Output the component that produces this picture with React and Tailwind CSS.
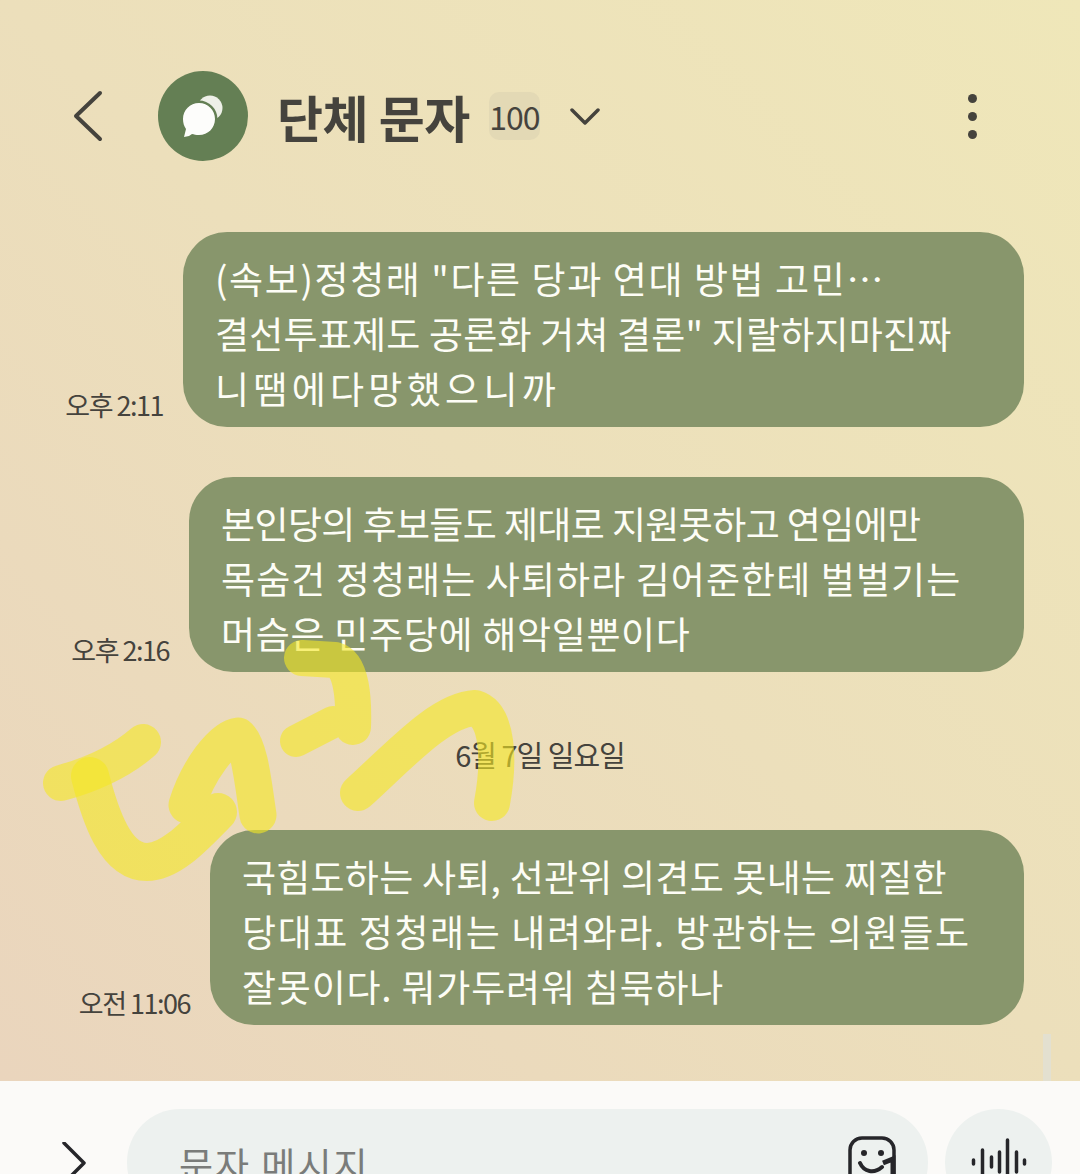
const krFont = "font-['Noto_Sans_CJK_KR',sans-serif]"

const messages = [
  {
    time: '오후 2:11',
    width: 'w-[841px]',
    lines: [
      { text: '(속보)정청래 "다른 당과 연대 방법 고민…', tracking: 'tracking-[1.6px]' },
      { text: '결선투표제도 공론화 거쳐 결론" 지랄하지마진짜', tracking: 'tracking-[0.2px]' },
      { text: '니땜에다망했으니까', tracking: 'tracking-[4.3px]' },
    ],
  },
  {
    time: '오후 2:16',
    width: 'w-[835px]',
    lines: [
      { text: '본인당의 후보들도 제대로 지원못하고 연임에만', tracking: 'tracking-[-0.6px]' },
      { text: '목숨건 정청래는 사퇴하라 김어준한테 벌벌기는', tracking: 'tracking-[1.1px]' },
      { text: '머슴은 민주당에 해악일뿐이다', tracking: 'tracking-[0.7px]' },
    ],
  },
]

const lastMessage = {
  time: '오전 11:06',
  width: 'w-[814px]',
  lines: [
    { text: '국힘도하는 사퇴, 선관위 의견도 못내는 찌질한', tracking: 'tracking-[0.25px]' },
    { text: '당대표 정청래는 내려와라. 방관하는 의원들도', tracking: 'tracking-[1.6px]' },
    { text: '잘못이다. 뭐가두려워 침묵하나', tracking: 'tracking-[0.8px]' },
  ],
}

function Bubble({ time, lines, width }) {
  return (
    <div className="flex items-end justify-end">
      <span className="mr-[20px] mb-[2px] whitespace-nowrap text-[27px] leading-[40px] tracking-[-1.5px] text-[#45433d]">{time}</span>
      <div className={`${width} h-[195px] shrink-0 rounded-[44px] bg-[#88966c] pl-[32px] pt-[19px]`}>
        {lines.map((line) => (
          <p key={line.text} className={`whitespace-nowrap text-[37px] leading-[55px] text-[#fdfdf6] ${line.tracking}`}>{line.text}</p>
        ))}
      </div>
    </div>
  )
}

// marker scribble drawn over the screenshot
function Highlighter() {
  const strokes = [
    { d: 'M90 776 C100 815 115 862 147 862 C172 862 198 832 218 812', w: 38 },
    { d: 'M187 805 C198 770 222 738 238 736 C250 745 254 790 258 815', w: 37 },
    { d: 'M296 741 L333 722', w: 32 },
    { d: 'M302 658 L335 660 C352 665 354 700 353 727', w: 36 },
    { d: 'M358 793 C400 755 440 710 475 708 C498 715 500 760 492 803', w: 36 },
  ]

  return (
    <svg className="pointer-events-none absolute left-0 top-0" width="1080" height="1174" viewBox="0 0 1080 1174" fill="none">
      <path d="M61 783 C90 775 120 762 143 742" stroke="#f5e823" strokeOpacity="0.6" strokeWidth="36" strokeLinecap="round" />
      <g opacity="0.6">
        {strokes.map((stroke) => (
          <path key={stroke.d} d={stroke.d} stroke="#f5e823" strokeWidth={stroke.w} strokeLinecap="round" strokeLinejoin="round" />
        ))}
      </g>
    </svg>
  )
}

export default function App() {
  return (
    <div className={`relative flex h-[1174px] w-[1080px] flex-col overflow-hidden ${krFont}`}>
      {/* Chat area */}
      <div className="relative h-[1081px] shrink-0 bg-gradient-to-tr from-[#ead5bd] via-[#ecdfbb] to-[#efe7b9] pr-[56px]">
        {/* Header */}
        <div className="flex h-[232px] items-start pl-[70px] pt-[71px]">
          <svg className="mt-[19px]" width="36" height="52" viewBox="0 0 36 52" fill="none">
            <path d="M30 3 L6 26 L30 49" stroke="#45433d" strokeWidth="4" strokeLinecap="round" strokeLinejoin="round" />
          </svg>
          <div className="ml-[52px] h-[90px] w-[90px] rounded-full bg-[#647f54]">
            <svg width="90" height="90" viewBox="0 0 90 90">
              <circle cx="52" cy="37" r="12.5" fill="#eef0e8" />
              <circle cx="41" cy="48" r="18.5" fill="#647f54" />
              <path d="M41 32 C50 32 57 39 57 48 C57 57 50 64 41 64 C38 64 36 63.5 34 63 L31 65 L26 66 L28 58 C26 55 25 52 25 48 C25 39 32 32 41 32 Z" fill="#fdfdfb" />
            </svg>
          </div>
          <h1 className="ml-[29px] whitespace-nowrap text-[50px] font-bold leading-[90px] tracking-[-0.5px] text-[#45433d]">단체 문자</h1>
          <span className="ml-[19px] mt-[21px] flex h-[48px] w-[51px] items-center justify-center rounded-[10px] bg-[#e3d9b5] text-[32px] tracking-[-1px] text-[#45433d]">100</span>
          <svg className="ml-[30px] mt-[36px]" width="30" height="20" viewBox="0 0 30 20" fill="none">
            <path d="M2 3 L15 16 L28 3" stroke="#45433d" strokeWidth="3.5" strokeLinecap="round" strokeLinejoin="round" />
          </svg>
          <div className="ml-auto mr-[47px] mt-[23px] flex flex-col gap-[9px]">
            <span className="h-[9px] w-[9px] rounded-full bg-[#45433d]" />
            <span className="h-[9px] w-[9px] rounded-full bg-[#45433d]" />
            <span className="h-[9px] w-[9px] rounded-full bg-[#45433d]" />
          </div>
        </div>

        {/* Messages */}
        <div className="flex flex-col gap-[50px]">
          {messages.map((message) => (
            <Bubble key={message.time} {...message} />
          ))}
        </div>
        <div className="flex h-[158px] items-center justify-center pl-[56px] pt-[8px]">
          <span className="whitespace-nowrap text-[29px] tracking-[-1px] text-[#45433d]">6월 7일 일요일</span>
        </div>
        <Bubble {...lastMessage} />

        <span className="absolute right-[29px] top-[1034px] h-[47px] w-[8px] bg-[#e3e0d0]" />
      </div>

      {/* Input bar */}
      <div className="flex flex-1 items-start bg-[#fbfaf8] pt-[28px]">
        <svg className="ml-[60px] mt-[33px]" width="30" height="60" viewBox="0 0 30 60" fill="none">
          <path d="M4 1 L24 21 L4 41" stroke="#26262a" strokeWidth="3.5" strokeLinecap="round" strokeLinejoin="round" />
        </svg>
        <div className="ml-[37px] flex h-[107px] w-[801px] shrink-0 items-start rounded-[53px] bg-[#edf1ef] pl-[52px] pt-[28px]">
          <span className="whitespace-nowrap text-[37px] leading-[55px] tracking-[2px] text-[#7a7c7a]">문자 메시지</span>
          <svg className="ml-auto mr-[30px] mt-[-1px]" width="50" height="60" viewBox="0 0 50 60" fill="none">
            <rect x="2" y="2" width="44" height="56" rx="12" stroke="#26262a" strokeWidth="3.5" />
            <circle cx="16" cy="17" r="3" fill="#26262a" />
            <circle cx="33" cy="17" r="3" fill="#26262a" />
            <path d="M12 27 C16 36 26 38 34 31" stroke="#26262a" strokeWidth="4" strokeLinecap="round" />
            <path d="M35 27 L45 23 V60" stroke="#26262a" strokeWidth="5" />
          </svg>
        </div>
        <div className="ml-[17px] flex h-[107px] w-[107px] shrink-0 items-start justify-center rounded-full bg-[#edf1ef] pt-[29px]">
          <svg width="60" height="50" viewBox="0 0 60 50" fill="none" stroke="#26262a" strokeWidth="3.5" strokeLinecap="round">
            <path d="M4.5 22 V26 M13.5 12 V36 M22.5 19 V29 M30.5 14 V34 M38.5 2 V46 M47.5 14 V34 M55.5 22 V26" />
          </svg>
        </div>
      </div>

      <Highlighter />
    </div>
  )
}
